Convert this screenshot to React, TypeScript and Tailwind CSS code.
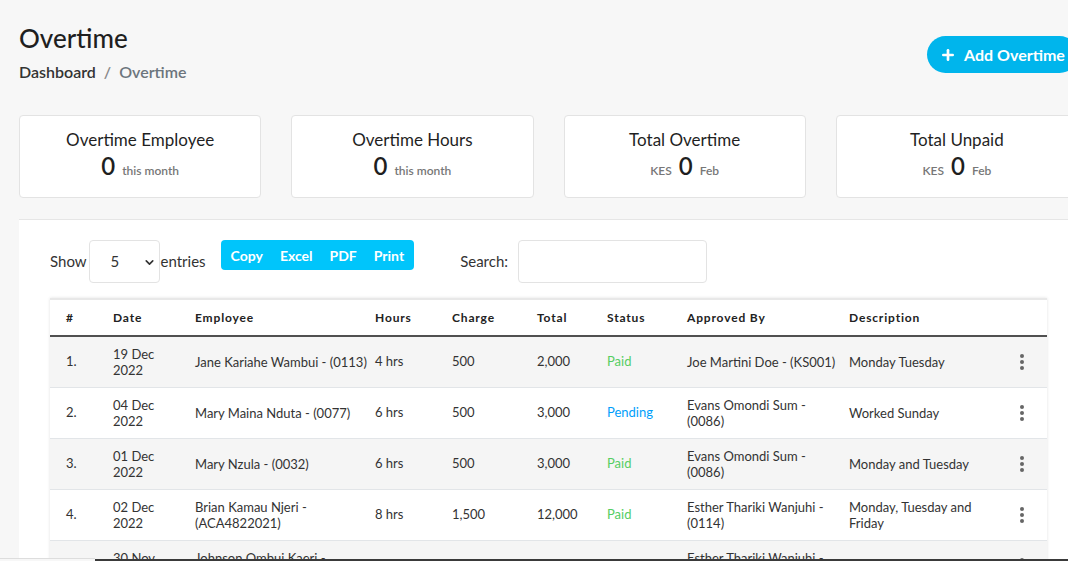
import { Plus, ChevronDown } from "lucide-react";

const rows = [
  {
    n: "1.",
    date: "19 Dec\n2022",
    emp: "Jane Kariahe Wambui - (0113)",
    hours: "4 hrs",
    charge: "500",
    total: "2,000",
    status: "Paid",
    by: "Joe Martini Doe - (KS001)",
    desc: "Monday Tuesday",
  },
  {
    n: "2.",
    date: "04 Dec\n2022",
    emp: "Mary Maina Nduta - (0077)",
    hours: "6 hrs",
    charge: "500",
    total: "3,000",
    status: "Pending",
    by: "Evans Omondi Sum -\n(0086)",
    desc: "Worked Sunday",
  },
  {
    n: "3.",
    date: "01 Dec\n2022",
    emp: "Mary Nzula - (0032)",
    hours: "6 hrs",
    charge: "500",
    total: "3,000",
    status: "Paid",
    by: "Evans Omondi Sum -\n(0086)",
    desc: "Monday and Tuesday",
  },
  {
    n: "4.",
    date: "02 Dec\n2022",
    emp: "Brian Kamau Njeri -\n(ACA4822021)",
    hours: "8 hrs",
    charge: "1,500",
    total: "12,000",
    status: "Paid",
    by: "Esther Thariki Wanjuhi -\n(0114)",
    desc: "Monday, Tuesday and\nFriday",
  },
  {
    n: "5.",
    date: "30 Nov\n2022",
    emp: "Johnson Ombui Kaeri -\n(0091)",
    hours: "5 hrs",
    charge: "500",
    total: "2,500",
    status: "Paid",
    by: "Esther Thariki Wanjuhi -\n(0114)",
    desc: "Saturday",
  },
];

function Kebab() {
  return (
    <svg width="6" height="18" viewBox="0 0 6 18" className="fill-[#666]">
      <circle cx="3" cy="3" r="2" />
      <circle cx="3" cy="9" r="2" />
      <circle cx="3" cy="15" r="2" />
    </svg>
  );
}

function StatCard({ title, pre, sub }: { title: string; pre?: string; sub: string }) {
  return (
    <div className="h-[83px] bg-white border border-[#e3e3e3] rounded-[4px] flex flex-col items-center pt-[12px]">
      <div className="text-[17px] text-[#1f1f1f] leading-[24px]">{title}</div>
      <div className="flex items-baseline gap-[7px]">
        {pre && <span className="text-[12px] font-semibold text-[#777]">{pre}</span>}
        <span className="text-[24px] font-semibold text-[#1f1f1f] leading-[28px]">0</span>
        <span className="text-[12px] font-semibold text-[#777]">{sub}</span>
      </div>
    </div>
  );
}

export default function App() {
  const th = "text-left text-[12px] font-bold tracking-[0.07em] text-[#222] px-4 h-[37px] align-middle";
  return (
    <div className="relative w-[1068px] h-[561px] overflow-hidden bg-[#f7f7f7] font-['Lato',sans-serif] text-[#333]">
      <div className="w-[1097px] px-[19px] pt-[22px]">
        <div className="flex justify-between">
          <div>
            <h1 className="text-[26px] leading-[32px] text-[#1f1f1f] font-medium">Overtime</h1>
            <div className="mt-[6px] text-[16px] font-semibold flex gap-[8px]">
              <span className="text-[#333]">Dashboard</span>
              <span className="text-[#888]">/</span>
              <span className="text-[#6c757d]">Overtime</span>
            </div>
          </div>
          <button className="mt-[14px] h-[37px] w-[151px] rounded-full bg-[#00b5ec] text-white text-[16px] font-bold flex items-center justify-center gap-[8px]">
            <Plus size={16} strokeWidth={4} />
            Add Overtime
          </button>
        </div>

        <div className="grid grid-cols-4 gap-[30px] mt-[31px]">
          <StatCard title="Overtime Employee" sub="this month" />
          <StatCard title="Overtime Hours" sub="this month" />
          <StatCard title="Total Overtime" pre="KES" sub="Feb" />
          <StatCard title="Total Unpaid" pre="KES" sub="Feb" />
        </div>

        <div className="mt-[21px] bg-white border-t border-[#e6e6e6] px-[31px] pt-[20px] h-[400px]">
          <div className="flex items-start">
            <div className="flex items-center text-[15px] text-[#333]">
              <span>Show</span>
              <div className="relative ml-[2px] mr-[1px]">
                <select className="appearance-none w-[71px] h-[43px] border border-[#e3e3e3] rounded-[4px] pl-[21px] text-[15px] bg-white">
                  <option>5</option>
                </select>
                <ChevronDown size={13} strokeWidth={3} className="absolute right-[4px] top-[16px] text-[#333]" />
              </div>
              <span>entries</span>
            </div>
            <div className="ml-[15px] h-[30px] flex items-center rounded-[4px] bg-[#00c5fb] text-white text-[14px] font-bold px-[10px] gap-[17px]">
              <span>Copy</span>
              <span>Excel</span>
              <span>PDF</span>
              <span>Print</span>
            </div>
            <div className="ml-[46px] flex items-center text-[15px]">
              <span className="mr-[10px]">Search:</span>
              <input className="w-[189px] h-[43px] border border-[#e3e3e3] rounded-[4px]" />
            </div>
          </div>

          <div className="mt-[15px] shadow-[0_0_3px_rgba(0,0,0,0.12)]">
            <table className="w-[997px] table-fixed border-collapse text-[13px] text-[#333]">
              <colgroup>
                <col className="w-[47px]" />
                <col className="w-[82px]" />
                <col className="w-[180px]" />
                <col className="w-[77px]" />
                <col className="w-[85px]" />
                <col className="w-[70px]" />
                <col className="w-[80px]" />
                <col className="w-[162px]" />
                <col className="w-[170px]" />
                <col className="w-[44px]" />
              </colgroup>
              <thead>
                <tr className="border-t-2 border-[#e8e8e8] border-b-2 border-b-[#505050]">
                  <th className={th}>#</th>
                  <th className={th}>Date</th>
                  <th className={th}>Employee</th>
                  <th className={th}>Hours</th>
                  <th className={th}>Charge</th>
                  <th className={th}>Total</th>
                  <th className={th}>Status</th>
                  <th className={th}>Approved By</th>
                  <th className={th}>Description</th>
                  <th className={th}></th>
                </tr>
              </thead>
              <tbody>
                {rows.map((r, i) => (
                  <tr
                    key={r.n}
                    className={`h-[51px] border-b border-[#e2e5e8] ${i % 2 === 0 ? "bg-[#f5f5f5]" : "bg-white"}`}
                  >
                    <td className="pl-4 align-middle">{r.n}</td>
                    <td className="pl-4 align-middle whitespace-pre leading-[16px]">{r.date}</td>
                    <td className="pl-4 align-middle whitespace-pre leading-[16px]">{r.emp}</td>
                    <td className="pl-4 align-middle">{r.hours}</td>
                    <td className="pl-4 align-middle">{r.charge}</td>
                    <td className="pl-4 align-middle">{r.total}</td>
                    <td
                      className={`pl-4 align-middle ${r.status === "Paid" ? "text-[#55ce63]" : "text-[#009efb]"}`}
                    >
                      {r.status}
                    </td>
                    <td className="pl-4 align-middle whitespace-pre leading-[16px]">{r.by}</td>
                    <td className="pl-4 align-middle whitespace-pre leading-[16px]">{r.desc}</td>
                    <td className="pl-4 align-middle">
                      <Kebab />
                    </td>
                  </tr>
                ))}
              </tbody>
            </table>
          </div>
        </div>
      </div>
      <div className="absolute bottom-0 left-0 right-0 h-[3px] flex">
        <div className="w-[95px] border-t border-[#ddd] bg-[#f7f7f7]" />
        <div className="flex-1 bg-[#3a3a3a] mt-[1px]" />
      </div>
    </div>
  );
}
